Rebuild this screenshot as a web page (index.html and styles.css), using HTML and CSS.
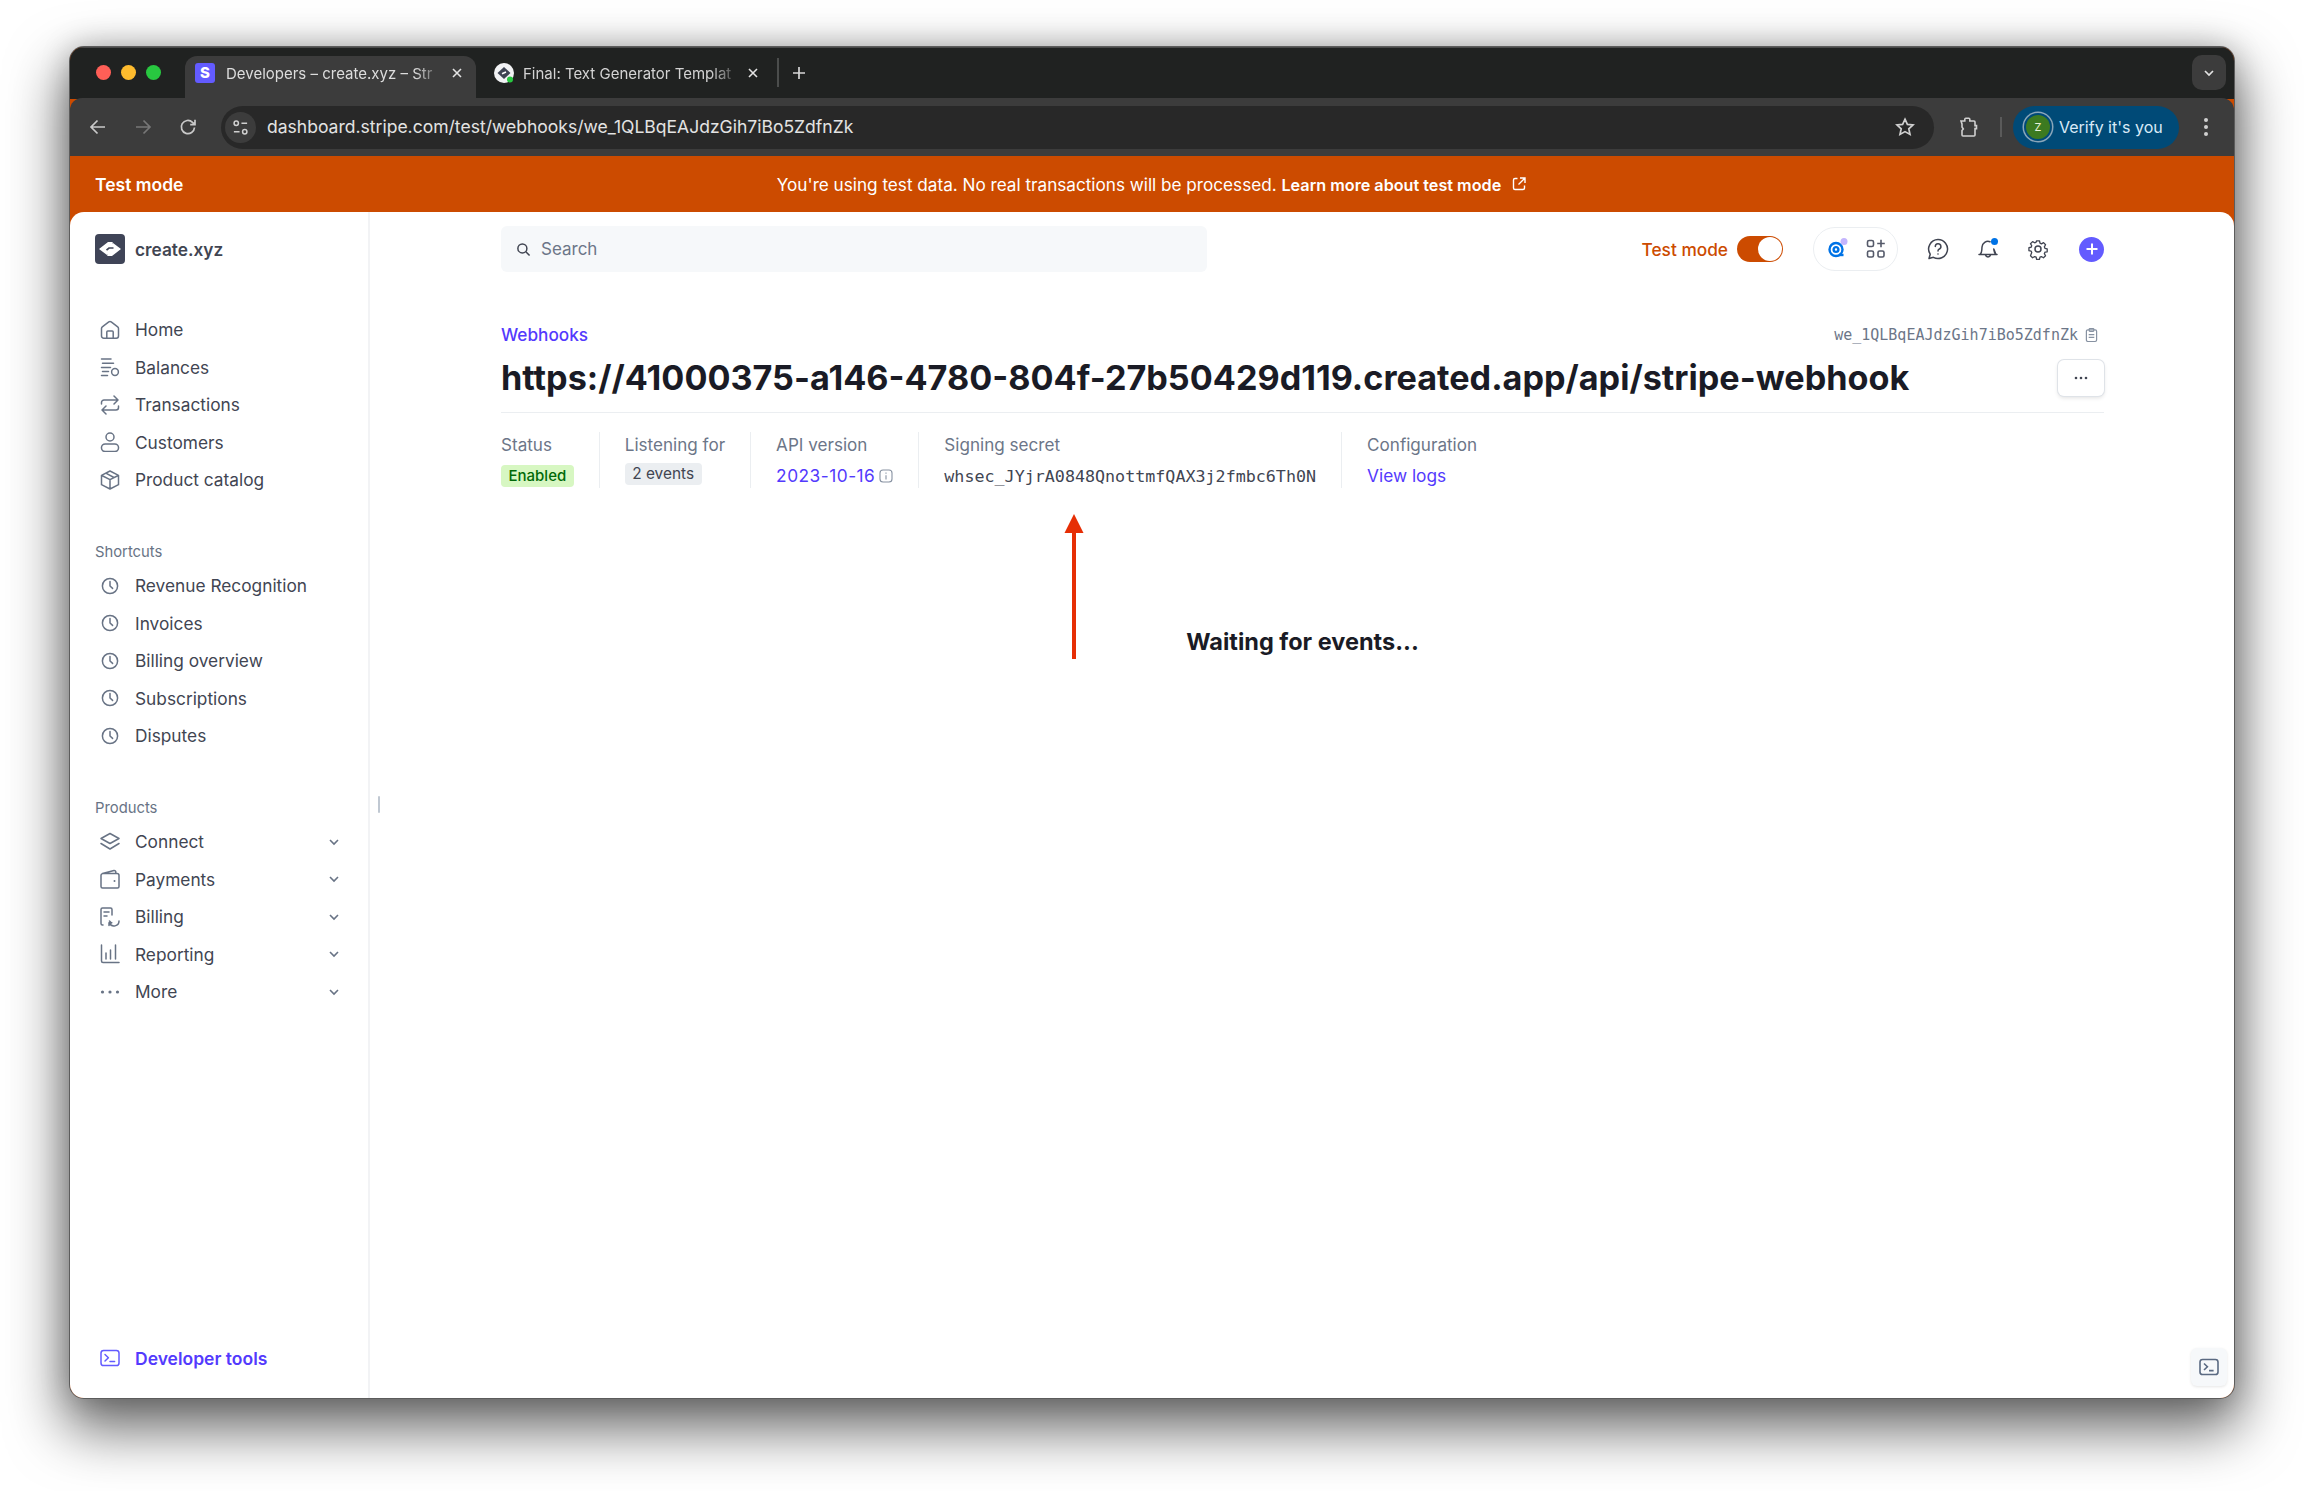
FILE: index.html
```html
<!DOCTYPE html>
<html lang="en">
<head>
<meta charset="utf-8">
<title>Webhook</title>
<link rel="stylesheet" href="styles.css">
</head>
<body>
<svg class="sprite" aria-hidden="true">
  <symbol id="clock" viewBox="0 0 20 20"><circle cx="10" cy="10" r="7.6"/><path d="M10 5.6V10l2.6 2.4"/></symbol>
  <symbol id="chev" viewBox="0 0 12 12"><path d="M2 4l4 4 4-4"/></symbol>
  <symbol id="term" viewBox="0 0 20 20"><rect x="1" y="2.5" width="18" height="15" rx="2.6"/><path d="M5 6.500l3.400 3.200L5 13M10 13.600h4.600"/></symbol>
</svg>
<div class="window">
  <div class="tabstrip">
    <div class="lights"><i class="light red"></i><i class="light amber"></i><i class="light green"></i></div>
    <div class="tab active">
      <span class="fav-s">S</span>
      <span class="tab-title">Developers – create.xyz – Str</span>
      <svg class="tab-x" viewBox="0 0 12 12"><path d="M2 2l8 8M10 2l-8 8"/></svg>
    </div>
    <div class="tab second">
      <svg class="fav-c" viewBox="0 0 20 20"><circle cx="10" cy="10" r="10" fill="#f2f3f5"/><path d="M3.500 10L10 4l6.500 6-6.500 6z" fill="#3e4453"/><path d="M8 10.800l4-1.800" stroke="#fff" stroke-width="1.600"/><circle cx="16" cy="16.500" r="3" fill="#28c840"/></svg>
      <span class="tab-title">Final: Text Generator Templat</span>
      <svg class="tab-x" viewBox="0 0 12 12"><path d="M2 2l8 8M10 2l-8 8"/></svg>
    </div>
    <i class="tab-sep"></i>
    <svg class="tab-plus" viewBox="0 0 14 14"><path d="M7 1v12M1 7h12"/></svg>
    <div class="tab-menu"><svg viewBox="0 0 12 12"><path d="M2 4l4 4 4-4"/></svg></div>
  </div>
  <div class="toolbar">
    <svg class="nav-icon" viewBox="0 0 20 20"><path d="M17 10H3.500M9.500 3.500L3 10l6.500 6.500"/></svg>
    <svg class="nav-icon dim" viewBox="0 0 20 20"><path d="M3 10h13.500M10.500 3.500L17 10l-6.500 6.500"/></svg>
    <svg class="nav-icon" viewBox="0 0 20 20"><path d="M16.500 10.500a6.600 6.600 0 1 1-2-5.200L17 7.500M17 2.800v4.900h-4.800"/></svg>
    <div class="omnibox">
      <span class="site-chip"><svg viewBox="0 0 18 18"><circle cx="4.500" cy="4.500" r="2.300"/><path d="M10 4.500h6M2 13.500h6"/><circle cx="13.500" cy="13.500" r="2.300"/></svg></span>
      <span class="url">dashboard.stripe.com/test/webhooks/we_1QLBqEAJdzGih7iBo5ZdfnZk</span>
      <svg class="star" viewBox="0 0 20 20"><path d="M10 2.200l2.400 5.200 5.600.6-4.200 3.800 1.200 5.600L10 14.600l-5 2.800 1.200-5.600L2 8l5.600-.6z"/></svg>
    </div>
    <svg class="puzzle" viewBox="0 0 20 22"><path d="M3 5h3.800V3.200a1 1 0 0 1 1-1h3a1 1 0 0 1 1 1V5H16a1 1 0 0 1 1 1v3.600h1.500v3H17V19a1 1 0 0 1-1 1H5a1 1 0 0 1-1-1v-4.500l1.300-1.500L4 11V8z"/></svg>
    <i class="tool-sep"></i>
    <div class="verify">
      <span class="avatar"><b>Z</b></span>
      <span>Verify it's you</span>
    </div>
    <svg class="kebab" viewBox="0 0 6 22"><circle cx="3" cy="4" r="2"/><circle cx="3" cy="11" r="2"/><circle cx="3" cy="18" r="2"/></svg>
  </div>
  <div class="banner">
    <span class="banner-name">Test mode</span>
    <div class="banner-msg">
      <span>You're using test data. No real transactions will be processed. <b>Learn more about test mode</b></span>
      <svg class="banner-ext" viewBox="0 0 16 16"><path d="M6.500 2.500H4A1.500 1.500 0 0 0 2.500 4v8A1.500 1.500 0 0 0 4 13.500h8a1.500 1.500 0 0 0 1.500-1.500V9.500M9 2h5v5M14 2L7.500 8.500"/></svg>
    </div>
  </div>
  <div class="page">
    <aside class="sidebar">
      <div class="account">
        <svg class="logo" viewBox="0 0 30 30"><rect width="30" height="30" rx="4" fill="#3f4457"/><path d="M4 15l9-7h5l-2.500 3.500h-2L18 9l8 6-9 7h-5l2.500-3.500h2L12 21z" fill="#fff"/><path d="M11.500 16.200l2.500-2.200h4.500" stroke="#3f4457" stroke-width="1.700" fill="none"/></svg>
        <span>create.xyz</span>
      </div>
      <nav class="nav-group first">
        <a class="nav-row"><svg class="ni" viewBox="0 0 20 20"><path d="M1.500 8.500a2 2 0 0 1 .8-1.600l6.500-5a2 2 0 0 1 2.400 0l6.500 5a2 2 0 0 1 .8 1.600V16a2.200 2.200 0 0 1-2.200 2.200H3.700A2.200 2.200 0 0 1 1.500 16zM6.800 18v-6a1 1 0 0 1 1-1h4.400a1 1 0 0 1 1 1v6"/></svg>Home</a>
        <a class="nav-row"><svg class="ni" viewBox="0 0 20 20"><path d="M1.500 2h9.500M2.500 6.200h11M1.500 10.400h9M2.500 14.500h6M1.500 18.500h6"/><circle cx="15" cy="15" r="3.400"/></svg>Balances</a>
        <a class="nav-row"><svg class="ni" viewBox="0 0 20 20"><path d="M1.500 9V7.500a2.500 2.500 0 0 1 2.500-2.500h14M14 1l4 4-4 4M18.500 11v1.500a2.500 2.500 0 0 1-2.500 2.500H2M6 11l-4 4 4 4"/></svg>Transactions</a>
        <a class="nav-row"><svg class="ni" viewBox="0 0 20 20"><circle cx="10" cy="5" r="4"/><path d="M5.200 12h9.600a3.700 3.700 0 0 1 0 7.500H5.200a3.700 3.700 0 0 1 0-7.500z"/></svg>Customers</a>
        <a class="nav-row"><svg class="ni" viewBox="0 0 20 20"><path d="M10 1l8.500 4.300v9.400L10 19l-8.500-4.300V5.300zM1.800 5.500L10 9.700l8.200-4.200M10 9.700V19M5.800 3.200l8.200 4.300"/></svg>Product catalog</a>
      </nav>
      <div class="group-label">Shortcuts</div>
      <nav class="nav-group">
        <a class="nav-row"><svg class="ni"><use href="#clock"/></svg>Revenue Recognition</a>
        <a class="nav-row"><svg class="ni"><use href="#clock"/></svg>Invoices</a>
        <a class="nav-row"><svg class="ni"><use href="#clock"/></svg>Billing overview</a>
        <a class="nav-row"><svg class="ni"><use href="#clock"/></svg>Subscriptions</a>
        <a class="nav-row"><svg class="ni"><use href="#clock"/></svg>Disputes</a>
      </nav>
      <div class="group-label">Products</div>
      <nav class="nav-group">
        <a class="nav-row"><svg class="ni" viewBox="0 0 20 20"><path d="M10 1.500l9 5-9 5-9-5zM1 11.500l9 5.500 9-5.500"/></svg>Connect<svg class="chev"><use href="#chev"/></svg></a>
        <a class="nav-row"><svg class="ni" viewBox="0 0 20 20"><path d="M1 6.500a2 2 0 0 1 2-2h14a2 2 0 0 1 2 2v11a1.500 1.500 0 0 1-1.500 1.500h-15A1.500 1.500 0 0 1 1 17.500zM2.500 4.500L14 1.500a1.500 1.500 0 0 1 1.800 1.400v1.600"/><circle cx="14.500" cy="12" r="1" class="fillc"/></svg>Payments<svg class="chev"><use href="#chev"/></svg></a>
        <a class="nav-row"><svg class="ni" viewBox="0 0 20 20"><path d="M3 18H2.500A1.500 1.500 0 0 1 1 16.500v-14A1.500 1.500 0 0 1 2.500 1h8A1.500 1.500 0 0 1 12 2.500V8M4 5h5M4 9h3M19 14a5 5 0 0 1-9.500 2.200M9 18.500V15.800h2.800M9.500 14l2 2"/></svg>Billing<svg class="chev"><use href="#chev"/></svg></a>
        <a class="nav-row"><svg class="ni" viewBox="0 0 20 20"><path d="M1.500 1v16a1.500 1.500 0 0 0 1.500 1.500h16M6 9v6M10.500 6v9M15.500 1v14"/></svg>Reporting<svg class="chev"><use href="#chev"/></svg></a>
        <a class="nav-row"><svg class="ni solid" viewBox="0 0 20 20"><circle cx="2.500" cy="10" r="1.600"/><circle cx="10" cy="10" r="1.600"/><circle cx="17.500" cy="10" r="1.600"/></svg>More<svg class="chev"><use href="#chev"/></svg></a>
      </nav>
      <a class="devtools"><svg class="ni"><use href="#term"/></svg>Developer tools</a>
    </aside>
    <i class="resize-handle"></i>
    <main class="main">
      <div class="topbar">
        <div class="search">
          <svg viewBox="0 0 16 16"><circle cx="6.800" cy="6.800" r="4.800"/><path d="M10.500 10.500L14.500 14.500"/></svg>
          <span>Search</span>
        </div>
        <div class="top-actions">
          <span class="test-label">Test mode</span>
          <span class="toggle"><i></i></span>
          <div class="pill-group">
            <svg class="assist" viewBox="0 0 22 22"><circle cx="10" cy="11.500" r="6.500"/><circle cx="10" cy="11.500" r="2.400"/><path d="M13 17h4.500"/><circle class="assist-dot" cx="18" cy="3.500" r="3.500"/></svg>
            <svg class="apps" viewBox="0 0 20 20"><rect x="1.500" y="1.500" width="6" height="6" rx="1.600"/><rect x="1.500" y="12" width="6" height="6" rx="1.600"/><rect x="12" y="12" width="6" height="6" rx="1.600"/><path d="M15 .8v7.500M11.200 4.500h7.600"/></svg>
          </div>
          <svg class="top-icon help" viewBox="0 0 22 22"><path d="M11 1.500a9.500 9.500 0 1 1-4.600 17.800L2 20.500l1.200-4.300A9.500 9.500 0 0 1 11 1.500z"/><path d="M8.300 8.500A2.800 2.800 0 1 1 12 11.200c-.8.400-1 .9-1 1.800"/><circle class="dot" cx="11" cy="16" r=".8"/></svg>
          <svg class="top-icon bell" viewBox="0 0 22 22"><path d="M3 16.500c1.300-1 1.700-2.300 1.800-4.500l.2-3a6 6 0 0 1 8-5.300M16.800 11l.2 1.500c.2 2 .6 3 2 4zM2 16.500h18M8.500 17a2.600 2.600 0 0 0 5 0"/><circle class="bell-dot" cx="17.500" cy="3.500" r="3.500"/></svg>
          <svg class="top-icon gear" viewBox="0 0 22 22"><circle cx="11" cy="11" r="3"/><path d="M9.300 1.500h3.400l.5 2.700 1.700.8 2.400-1.400 2.300 2.400-1.400 2.400.7 1.700 2.600.6v3.400l-2.600.5-.7 1.700 1.400 2.400-2.400 2.300-2.400-1.400-1.600.7-.6 2.600H9.300l-.5-2.600-1.700-.7-2.400 1.400-2.400-2.300L3.700 15 3 13.300l-2.500-.5V9.400L3 8.900l.7-1.700-1.400-2.400 2.400-2.400 2.400 1.400 1.700-.8z" transform="translate(1.500 1.500) scale(.87)"/></svg>
          <span class="create-btn"><svg viewBox="0 0 14 14"><path d="M7 1.500v11M1.500 7h11"/></svg></span>
        </div>
      </div>
      <div class="head-row">
        <a class="crumb">Webhooks</a>
        <div class="endpoint-id">
          <span>we_1QLBqEAJdzGih7iBo5ZdfnZk</span>
          <svg viewBox="0 0 14 16"><rect x="1.500" y="2.500" width="11" height="12.500" rx="1.500"/><rect x="4.500" y="1" width="5" height="3" rx=".8"/><path d="M4 7.500h6M4 10.500h6"/></svg>
        </div>
      </div>
      <div class="title-row">
        <h1>https://41000375-a146-4780-804f-27b50429d119.created.app/api/stripe-webhook</h1>
        <span class="more-btn"><svg viewBox="0 0 14 4"><circle cx="2" cy="2" r="1.300"/><circle cx="7" cy="2" r="1.300"/><circle cx="12" cy="2" r="1.300"/></svg></span>
      </div>
      <div class="meta">
        <div class="meta-cell"><div class="meta-label">Status</div><span class="badge ok">Enabled</span></div>
        <div class="meta-cell"><div class="meta-label">Listening for</div><span class="badge neutral">2 events</span></div>
        <div class="meta-cell"><div class="meta-label">API version</div><div class="meta-link"><span class="date">2023-10-16</span><svg class="info" viewBox="0 0 14 14"><rect x="1" y="1" width="12" height="12" rx="3"/><path d="M7 6.200v4.300M7 3.500v1.200"/></svg></div></div>
        <div class="meta-cell"><div class="meta-label">Signing secret</div><span class="secret">whsec_JYjrA0848QnottmfQAX3j2fmbc6Th0N</span></div>
        <div class="meta-cell"><div class="meta-label">Configuration</div><div class="meta-link">View logs</div></div>
      </div>
      <p class="waiting">Waiting for events...</p>
      <svg class="annotation" viewBox="0 0 20 146"><path d="M10 0l9.500 19H.5z" fill="#e62e05"/><path d="M10 18v127" stroke="#e62e05" stroke-width="4"/></svg>
      <span class="term-btn"><svg><use href="#term"/></svg></span>
    </main>
  </div>
</div>
</body>
</html>
```

FILE: styles.css
```css
* { box-sizing: border-box; }
html, body { height: 100%; }
body {
  margin: 0;
  padding: 47px 70px 93px;
  background: #fff;
  font-family: Inter, "Liberation Sans", sans-serif;
  color: #414552;
  overflow: hidden;
}
.sprite { display: none; }
svg { display: block; flex: none; }

.window {
  height: 1351px;
  display: flex;
  flex-direction: column;
  border-radius: 14px;
  overflow: hidden;
  background: #cc4b00;
  box-shadow: 0 0 0 1px #5c5c5c, 0 26px 56px 6px rgba(0,0,0,.58), 0 0 30px rgba(0,0,0,.22);
}

/* tab strip */
.tabstrip {
  height: 52px;
  flex: none;
  background: #202221;
  display: flex;
  align-items: flex-end;
  padding-left: 26px;
  border-top: 1px solid #4a4a4a;
}
.lights { display: flex; gap: 10px; align-self: center; margin: 0 24px 2px 0; }
.light { width: 15px; height: 15px; border-radius: 50%; display: block; }
.red { background: #ff5f57; }
.amber { background: #febc2e; }
.green { background: #28c840; }
.tab {
  height: 43px;
  width: 291px;
  display: flex;
  align-items: center;
  padding: 0 13px 9px 10px;
  font-size: 15px;
  color: #dcdcdc;
}
.tab.active { background: #3c3c3c; border-radius: 12px 12px 0 0; }
.tab.second { padding: 0 8px 9px 18px; color: #d3d3d3; }
.fav-s {
  width: 20px; height: 20px; flex: none;
  border-radius: 3px;
  background: #635bff;
  color: #fff;
  font-weight: 800;
  font-size: 15px;
  text-align: center;
  line-height: 20px;
}
.fav-c { width: 20px; height: 20px; }
.tab-title {
  flex: 1;
  min-width: 0;
  margin-left: 11px;
  white-space: nowrap;
  -webkit-mask-image: linear-gradient(to right, #000 86%, transparent 100%);
  mask-image: linear-gradient(to right, #000 86%, transparent 100%);
}
.second .tab-title { margin-left: 9px; }
.tab-x { width: 12px; height: 12px; margin-left: 6px; fill: none; stroke: #e3e3e3; stroke-width: 1.6; }
.tab-sep { width: 2px; height: 29px; background: #4b4d4c; display: block; align-self: center; margin: 0 0 2px 10px; }
.tab-plus { width: 14px; height: 14px; margin: 0 0 2px 13px; align-self: center; fill: none; stroke: #d6d6d6; stroke-width: 1.7; }
.tab-menu {
  margin: 0 8px 2px auto;
  align-self: center;
  width: 34px; height: 35px;
  border-radius: 10px;
  background: #3c3c3c;
  display: flex; align-items: center; justify-content: center;
}
.tab-menu svg { width: 12px; height: 12px; fill: none; stroke: #e3e3e3; stroke-width: 1.7; }

/* toolbar */
.toolbar {
  height: 58px;
  flex: none;
  background: #3c3c3c;
  border-radius: 12px 12px 0 0;
  margin-top: -1px;
  display: flex;
  align-items: center;
  padding-left: 18px;
}
.nav-icon { width: 20px; height: 20px; margin-right: 25px; fill: none; stroke: #c9c9c9; stroke-width: 1.7; }
.nav-icon.dim { stroke: #777; }
.omnibox {
  width: 1713px;
  height: 43px;
  margin-left: -2px;
  flex: none;
  background: #282828;
  border-radius: 22px;
  display: flex;
  align-items: center;
  padding: 0 19px 0 4px;
}
.site-chip {
  width: 31px; height: 31px; border-radius: 50%;
  background: #3c3c3c;
  display: flex; align-items: center; justify-content: center;
  margin-right: 11px;
}
.site-chip svg { width: 17px; height: 17px; fill: none; stroke: #d0d0d0; stroke-width: 1.6; }
.url { flex: 1; font-size: 17.550px; color: #e3e3e3; white-space: nowrap; padding-bottom: 2px; }
.star { width: 20px; height: 20px; fill: none; stroke: #d0d0d0; stroke-width: 1.7; }
.puzzle { width: 20px; height: 22px; margin-left: 24px; fill: none; stroke: #d0d0d0; stroke-width: 1.6; }
.tool-sep { width: 2px; height: 20px; background: #5a5a5a; display: block; margin: 0 11px 0 22px; }
.verify {
  width: 166px; height: 43px;
  flex: none;
  border-radius: 22px;
  background: #004a77;
  color: #d9eaf7;
  font-size: 16px;
  white-space: nowrap;
  display: flex; align-items: center;
  padding-left: 13px;
  gap: 9px;
}
.avatar {
  width: 24px; height: 24px; border-radius: 50%;
  flex: none;
  background: #3c7a20;
  box-shadow: 0 0 0 2px #004a77, 0 0 0 3.500px #8aa6ba;
  display: flex; align-items: center; justify-content: center;
  color: #e8f1d8;
  font-size: 11px;
}
.avatar b { font-weight: 400; }
.kebab { width: 6px; height: 22px; margin-left: 24px; fill: #d0d0d0; }

/* banner */
.banner {
  height: 56px;
  flex: none;
  background: #cc4b00;
  color: #fff;
  font-size: 17.150px;
  display: grid;
  grid-template-columns: 1fr auto 1fr;
  align-items: center;
  padding: 0 25px;
}
.banner-name { font-weight: 600; font-size: 17.500px; }
.banner-msg { grid-column: 2; display: flex; align-items: center; white-space: nowrap; }
.banner-msg b { font-weight: 600; font-size: 16.200px; }
.banner-ext { width: 16px; height: 16px; margin-left: 10px; fill: none; stroke: #fff; stroke-width: 1.4; }

/* page */
.page {
  flex: 1;
  min-height: 0;
  display: flex;
  background: #fff;
  border-radius: 14px 14px 0 0;
  overflow: hidden;
}
.sidebar {
  width: 300px;
  flex: none;
  border-right: 2px solid #f2f3f5;
  padding: 22px 0 28px 25px;
  display: flex;
  flex-direction: column;
}
.account {
  display: flex; align-items: center; gap: 10px;
  height: 30px;
  font-size: 17.300px; font-weight: 600;
  color: #414552;
}
.logo { width: 30px; height: 30px; }
.nav-group { display: flex; flex-direction: column; }
.nav-group.first { margin-top: 47px; }
.nav-row {
  height: 37.500px;
  display: flex;
  align-items: center;
  font-size: 17.300px;
  font-weight: 400;
  color: #414552;
  padding-right: 25px;
}
.ni {
  width: 20px; height: 20px;
  margin: 0 15px 0 5px;
  fill: none;
  stroke: #687385;
  stroke-width: 1.5;
  stroke-linecap: round;
  stroke-linejoin: round;
}
.ni.solid { fill: #687385; stroke: none; }
.fillc { fill: #687385; stroke: none; }
.chev { width: 12px; height: 12px; margin-left: auto; margin-right: 3.500px; fill: none; stroke: #687385; stroke-width: 1.6; }
.group-label { font-size: 14.800px; font-weight: 400; color: #687385; height: 17px; line-height: 17px; margin: 45px 0 6.500px; }
.devtools {
  margin-top: auto;
  display: flex; align-items: center;
  font-size: 17.500px; font-weight: 600;
  color: #533afd;
  height: 24px;
}
.devtools .ni { stroke: #635bff; }
.resize-handle { width: 2px; height: 17px; border-radius: 1px; background: #c0c8d2; display: block; margin: 584px 0 0 8px; flex: none; }

/* main */
.main {
  flex: 1;
  min-width: 0;
  position: relative;
  padding: 14px 130px 0 121px;
}
.topbar { display: flex; align-items: center; justify-content: space-between; height: 46px; }
.search {
  width: 706px; height: 46px;
  background: #f6f8fa;
  border-radius: 6px;
  display: flex; align-items: center;
  padding-left: 15px;
  gap: 10px;
  color: #6c7688;
  font-size: 17px;
}
.search svg { width: 15px; height: 15px; fill: none; stroke: #414552; stroke-width: 1.6; }
.top-actions { display: flex; align-items: center; }
.test-label { color: #cc4b00; font-size: 17.300px; font-weight: 500; }
.toggle {
  width: 46px; height: 26px; border-radius: 13px;
  background: #cc4b00;
  margin-left: 9px;
  display: flex; align-items: center; justify-content: flex-end;
  padding-right: 1px;
}
.toggle i { width: 24px; height: 24px; border-radius: 50%; background: #fff; display: block; }
.pill-group {
  width: 85px; height: 44px; border-radius: 22px;
  border: 1px solid #ebeef1;
  margin-left: 30px;
  display: flex; align-items: center;
  padding-left: 12px;
  gap: 18px;
}
.assist { width: 22px; height: 22px; fill: none; stroke: #0073e6; stroke-width: 2.4; }
.assist-dot { fill: #c4b5fd; stroke: none; }
.apps { width: 20px; height: 20px; fill: none; stroke: #545969; stroke-width: 1.6; }
.top-icon { width: 22px; height: 22px; fill: none; stroke: #414552; stroke-width: 1.5; stroke-linecap: round; stroke-linejoin: round; }
.help { margin-left: 29px; }
.bell { margin-left: 28px; }
.gear { margin-left: 28px; }
.top-icon .dot { fill: #414552; stroke: none; }
.bell-dot { fill: #0073e6; stroke: none; }
.create-btn {
  width: 25px; height: 25px; border-radius: 50%;
  background: #635bff;
  margin-left: 30px;
  display: flex; align-items: center; justify-content: center;
}
.create-btn svg { width: 14px; height: 14px; fill: none; stroke: #fff; stroke-width: 2; }

.head-row {
  margin-top: 50px;
  display: flex; align-items: center; justify-content: space-between;
  height: 24px;
}
.crumb { color: #533afd; font-size: 17.200px; font-weight: 500; }
.endpoint-id { display: flex; align-items: center; gap: 7px; font-family: "DejaVu Sans Mono", monospace; font-size: 15px; color: #6c7688; white-space: nowrap; padding: 2px 6px 0 0; }
.endpoint-id svg { width: 13px; height: 16px; fill: none; stroke: #8792a2; stroke-width: 1.3; }
.title-row {
  margin-top: 14px;
  height: 53px;
  display: flex; align-items: flex-start; justify-content: space-between;
  border-bottom: 1px solid #ebeef1;
}
h1 {
  margin: 0;
  font-size: 34.200px;
  line-height: 36px;
  font-weight: 700;
  color: #1a1b25;
  white-space: nowrap;
}
.more-btn {
  width: 46px; height: 36px;
  border-radius: 6px;
  background: #fff;
  box-shadow: 0 0 0 1px #dfe3e8, 0 2px 4px rgba(0,0,0,.12);
  display: flex; align-items: center; justify-content: center;
}
.more-btn svg { width: 14px; height: 4px; fill: #414552; }
.meta { display: flex; margin-top: 19px; }
.meta-cell {
  height: 56px;
  padding: 1px 25px 0;
  border-right: 1px solid #ebeef1;
  display: flex; flex-direction: column;
  align-items: flex-start;
  gap: 8px;
}
.meta-cell:first-child { padding-left: 0; }
.meta-cell:last-child { border-right: 0; }
.meta-label { font-size: 17.100px; line-height: 24px; color: #6c7688; white-space: nowrap; }
.badge { font-size: 15px; font-weight: 500; height: 22px; line-height: 22px; padding: 0 7.500px; border-radius: 4px; white-space: nowrap; }
.ok { background: #d7f7c2; color: #006908; }
.neutral { background: #ebeef1; color: #414552; font-weight: 400; font-size: 15.400px; margin-top: -2px; }
.meta-link { color: #533afd; font-size: 17.300px; line-height: 22px; display: flex; align-items: center; gap: 4px; white-space: nowrap; }
.date { letter-spacing: .5px; }
.info { width: 14px; height: 14px; fill: none; stroke: #8792a2; stroke-width: 1.1; }
.secret { font-family: "DejaVu Sans Mono", monospace; font-size: 16.700px; color: #414552; white-space: nowrap; line-height: 22px; }
.waiting {
  margin: 139px 0 0;
  text-align: center;
  font-size: 23.500px;
  line-height: 30px;
  font-weight: 700;
  color: #1a1b25;
}
.annotation { position: absolute; left: 684px; top: 302px; width: 20px; height: 146px; }
.term-btn {
  position: absolute; right: 7px; bottom: 12px;
  width: 36px; height: 38px;
  border-radius: 6px;
  background: #f6f8fa;
  box-shadow: 0 1px 3px rgba(0,0,0,.1);
  display: flex; align-items: center; justify-content: center;
}
.term-btn svg { width: 20px; height: 20px; fill: none; stroke: #5b6a82; stroke-width: 1.6; }
```
